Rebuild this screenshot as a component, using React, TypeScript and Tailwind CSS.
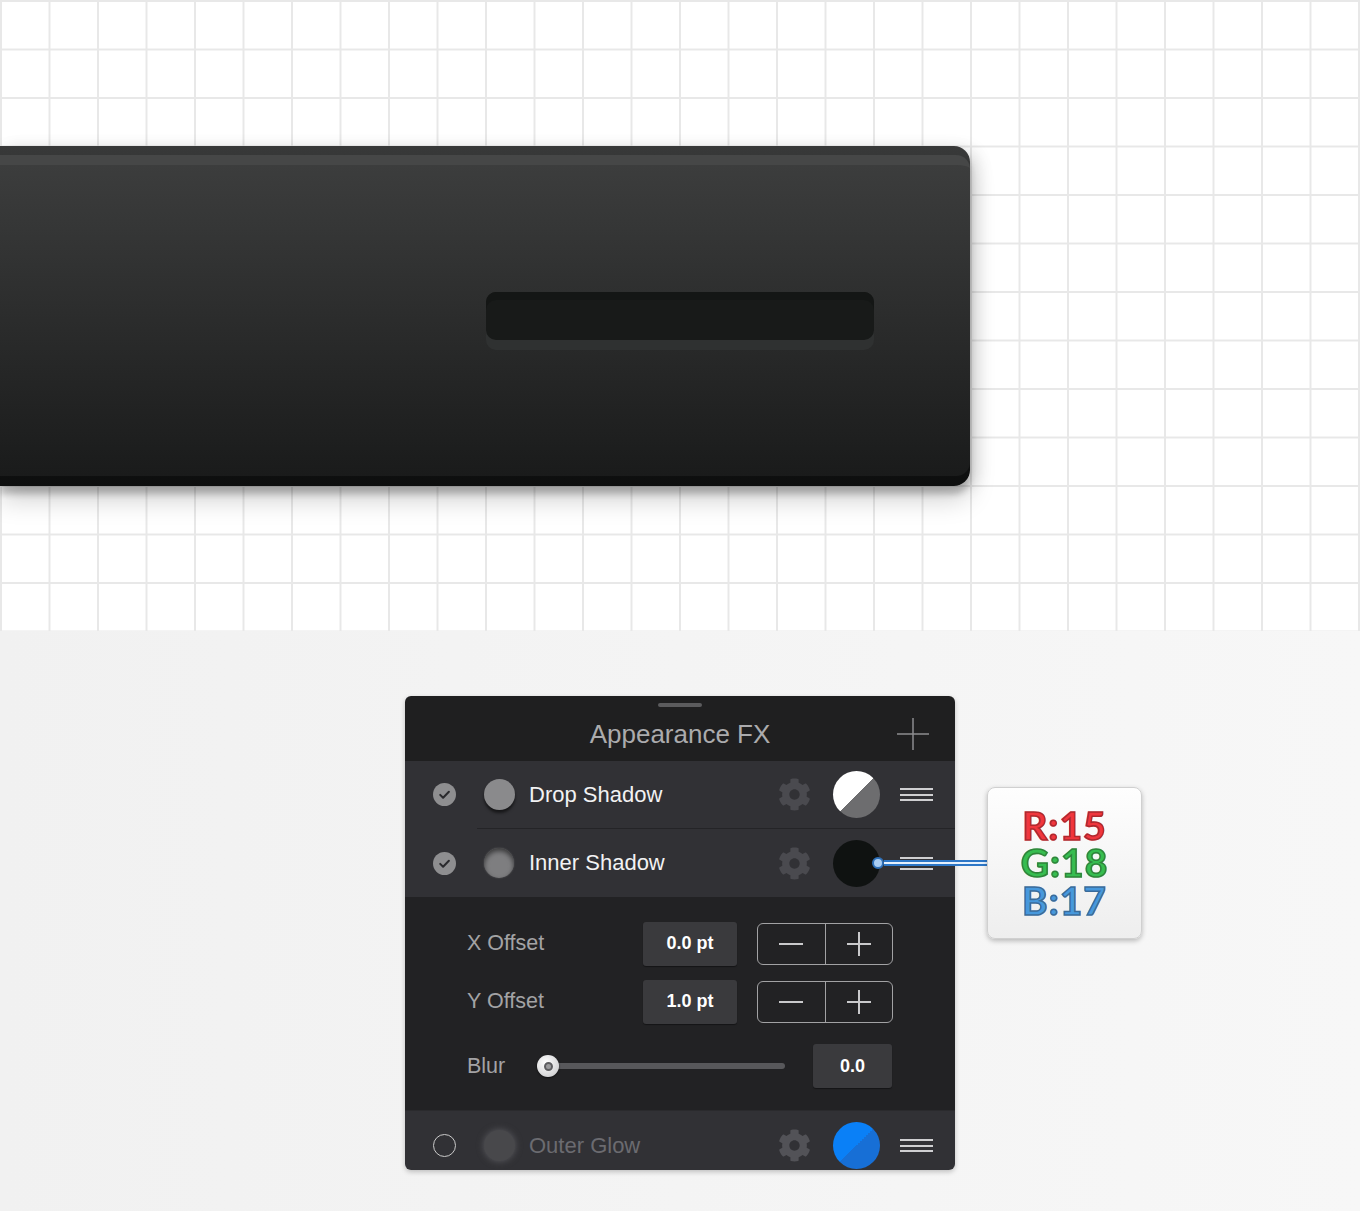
import { FaCog } from 'react-icons/fa'

type Effect = {
  key: string
  label: string
  enabled: boolean
  swatch: 'drop' | 'inner' | 'glow'
  color: string
}

const effects: Effect[] = [
  { key: 'drop', label: 'Drop Shadow', enabled: true, swatch: 'drop', color: 'bg-[linear-gradient(135deg,#ffffff_50%,#6d6d6f_50%)]' },
  { key: 'inner', label: 'Inner Shadow', enabled: true, swatch: 'inner', color: 'bg-[#0f1211]' },
  { key: 'glow', label: 'Outer Glow', enabled: false, swatch: 'glow', color: 'bg-[linear-gradient(135deg,#0a80f7_50%,#176fd6_50%)]' }
]

function CheckDot({ on }: { on: boolean }) {
  if (!on) {
    return <div className="h-[23px] w-[23px] rounded-full border-[1.5px] border-[#cacaca]" />
  }

  return (
    <svg height="23" viewBox="0 0 23 23" width="23">
      <circle cx="11.5" cy="11.5" fill="#8e8e90" r="11.5" />
      <path
        d="M7.2 11.9l2.9 2.9 5.8-6.1"
        fill="none"
        stroke="#2a2a2d"
        strokeLinecap="round"
        strokeLinejoin="round"
        strokeWidth="2"
      />
    </svg>
  )
}

function Swatch({ kind }: { kind: Effect['swatch'] }) {
  if (kind === 'drop') {
    return <div className="h-[31px] w-[31px] rounded-full bg-[#8a8a8c] shadow-[0_3px_3px_rgba(0,0,0,0.55)]" />
  }

  if (kind === 'inner') {
    return (
      <div className="h-[30px] w-[30px] rounded-full bg-[#7e7e80] shadow-[inset_0_3px_5px_rgba(0,0,0,0.55),0_0_2px_rgba(120,120,120,0.6)]" />
    )
  }

  return <div className="h-[31px] w-[31px] rounded-full bg-[#48484b] shadow-[0_0_7px_rgba(95,95,100,0.9)]" />
}

function Hamburger() {
  return (
    <div className="flex w-[33px] flex-col gap-[3.5px]">
      <div className="h-[2px] bg-[#cfcfd1]" />
      <div className="h-[2px] bg-[#cfcfd1]" />
      <div className="h-[2px] bg-[#cfcfd1]" />
    </div>
  )
}

function EffectRow({ fx, className }: { fx: Effect; className: string }) {
  return (
    <div className={`flex items-center bg-[#313135] pl-[28px] pr-[22px] ${className}`}>
      <CheckDot on={fx.enabled} />
      <div className="ml-[27px] flex w-[32px] justify-center">
        <Swatch kind={fx.swatch} />
      </div>
      <div
        className={`ml-[14px] flex-1 text-[22px] leading-none ${fx.enabled ? 'text-[#f2f2f3]' : 'text-[#6b6b70]'}`}
      >
        {fx.label}
      </div>
      <FaCog className={fx.enabled ? 'text-[#4a4a4f]' : 'text-[#525257]'} size={33} />
      <div className={`ml-[22px] h-[47px] w-[47px] rounded-full ${fx.color}`} />
      <div className="ml-[20px]">
        <Hamburger />
      </div>
    </div>
  )
}

function ValueBox({ value, w }: { value: string; w: string }) {
  return (
    <div
      className={`flex h-[44px] items-center justify-center rounded-[3px] bg-[#3a3a3d] text-[18px] font-bold text-white shadow-[0_1px_1px_rgba(0,0,0,0.4)] ${w}`}
    >
      {value}
    </div>
  )
}

function Stepper() {
  return (
    <div className="ml-[20px] flex h-[42px] w-[136px] rounded-[6px] border-[1.5px] border-[#a2a2a4]">
      <div className="flex flex-1 items-center justify-center border-r-[1.5px] border-[#a2a2a4]">
        <div className="h-[2px] w-[24px] bg-[#c9c9cb]" />
      </div>
      <div className="flex flex-1 items-center justify-center">
        <svg height="24" viewBox="0 0 24 24" width="24">
          <path d="M12 0v24M0 12h24" stroke="#c9c9cb" strokeWidth="2" />
        </svg>
      </div>
    </div>
  )
}

function OffsetRow({ label, value, className }: { label: string; value: string; className?: string }) {
  return (
    <div className={`flex h-[43px] items-center ${className ?? ''}`}>
      <div className="w-[176px] text-[21.5px] text-[#a3a3a5]">{label}</div>
      <ValueBox value={value} w="w-[94px]" />
      <Stepper />
    </div>
  )
}

// One text block, each line tinted by a hard-stop gradient clipped to the glyphs.
function RgbLabel() {
  return (
    <div className="flex h-[152px] w-[155px] items-center justify-center rounded-[8px] border border-[#d0d0d0] bg-[linear-gradient(#fefefe,#eeeeee)] font-['Lato','Open_Sans',sans-serif] shadow-[0_2px_5px_rgba(0,0,0,0.25)]">
      <div className="whitespace-pre-line bg-[linear-gradient(#f0363e_0px,#f0363e_37.5px,#36bd50_37.5px,#36bd50_75px,#4798dc_75px)] bg-clip-text text-center text-[39px] font-bold leading-[37.5px] tracking-[1px] text-transparent [-webkit-text-stroke:1.6px_rgba(30,10,10,0.32)]">
        {'R:15\nG:18\nB:17'}
      </div>
    </div>
  )
}

function AppearancePanel() {
  return (
    <div className="relative w-[550px] rounded-[6px] shadow-[0_2px_5px_rgba(0,0,0,0.22)]">
      <div className="overflow-hidden rounded-[6px]">
        <div className="flex h-[65px] flex-col bg-[#1f1f20] pt-[7px]">
          <div className="mx-auto h-[4px] w-[44px] rounded-full bg-[#5b5b5d]" />
          <div className="grid flex-1 grid-cols-[1fr_auto_1fr] items-center">
            <div />
            <div className="text-[26px] text-[#ababad]">Appearance FX</div>
            <div className="flex justify-end pr-[26px]">
              <svg height="32" viewBox="0 0 32 32" width="32">
                <path d="M16 0v32M0 16h32" stroke="#8d8d8f" strokeWidth="1.5" />
              </svg>
            </div>
          </div>
        </div>

        <EffectRow className="h-[67px]" fx={effects[0]} />
        <div className="h-px bg-[#313135] pl-[72px]">
          <div className="h-px bg-[#242427]" />
        </div>
        <EffectRow className="h-[68px]" fx={effects[1]} />

        <div className="bg-[#222224] pb-[22px] pl-[62px] pt-[25px]">
          <OffsetRow label="X Offset" value="0.0 pt" />
          <OffsetRow className="mt-[15px]" label="Y Offset" value="1.0 pt" />
          <div className="mt-[21px] flex h-[44px] items-center">
            <div className="w-[70px] text-[21.5px] text-[#a3a3a5]">Blur</div>
            <div className="relative flex w-[248px] items-center">
              <div className="ml-[10px] h-[6px] w-[238px] rounded-full bg-[#58585b]" />
              <div className="absolute left-0 top-1/2 flex h-[22px] w-[22px] -translate-y-1/2 items-center justify-center rounded-full bg-[radial-gradient(circle_at_40%_35%,#ffffff,#c4c4c6)] shadow-[0_1px_2px_rgba(0,0,0,0.6)]">
                <div className="h-[9px] w-[9px] rounded-full border-2 border-[#5d5d60] bg-[#9a9a9c]" />
              </div>
            </div>
            <div className="ml-[28px]">
              <ValueBox value="0.0" w="w-[79px]" />
            </div>
          </div>
        </div>

        <div className="h-px bg-[#2a2a2d]" />
        <EffectRow className="h-[59px] pt-[10px]" fx={effects[2]} />
      </div>

      {/* colour pick callout */}
      <div className="absolute left-[479px] top-[163.5px] h-[6px] w-[108px] border-y-2 border-[#2c76c6] bg-[#e6f1fd]" />
      <div className="absolute left-[467px] top-[160.5px] h-[12px] w-[12px] rounded-full border-2 border-[#2d6fb8] bg-[#a9cdf3]" />
      <div className="absolute left-[582px] top-[91px]">
        <RgbLabel />
      </div>
    </div>
  )
}

function DarkBar() {
  return (
    <div className="flex h-[340px] w-[970px] flex-col rounded-r-[16px] bg-[linear-gradient(#383939,#0d0e0e)] pb-[10px] pt-[9px] shadow-[0_8px_6px_rgba(0,0,0,0.2),0_14px_26px_rgba(0,0,0,0.18),8px_2px_16px_rgba(0,0,0,0.1)]">
      <div className="flex-1 rounded-r-[14px] border-t-[10px] border-[#464747] bg-[linear-gradient(#3c3d3d,#1a1b1b)] pl-[486px] pt-[127px]">
        <div className="h-[48px] w-[388px] rounded-[10px] bg-[#181a19] shadow-[inset_0_8px_0_#141615,0_10px_0_#2f3131]" />
      </div>
    </div>
  )
}

export default function App() {
  return (
    <div className="h-[1211px] w-[1360px] overflow-hidden font-['Liberation_Sans',Arial,sans-serif]">
      <div className="h-[631px] bg-white bg-[linear-gradient(to_right,#e8e8e8_2px,transparent_2px),linear-gradient(to_bottom,#e8e8e8_2px,transparent_2px)] bg-[size:48.5px_48.5px] pt-[146px]">
        <DarkBar />
      </div>
      <div className="h-[580px] bg-[linear-gradient(to_right,#f1f1f1,#f7f7f7)] pl-[405px] pt-[65px]">
        <AppearancePanel />
      </div>
    </div>
  )
}
